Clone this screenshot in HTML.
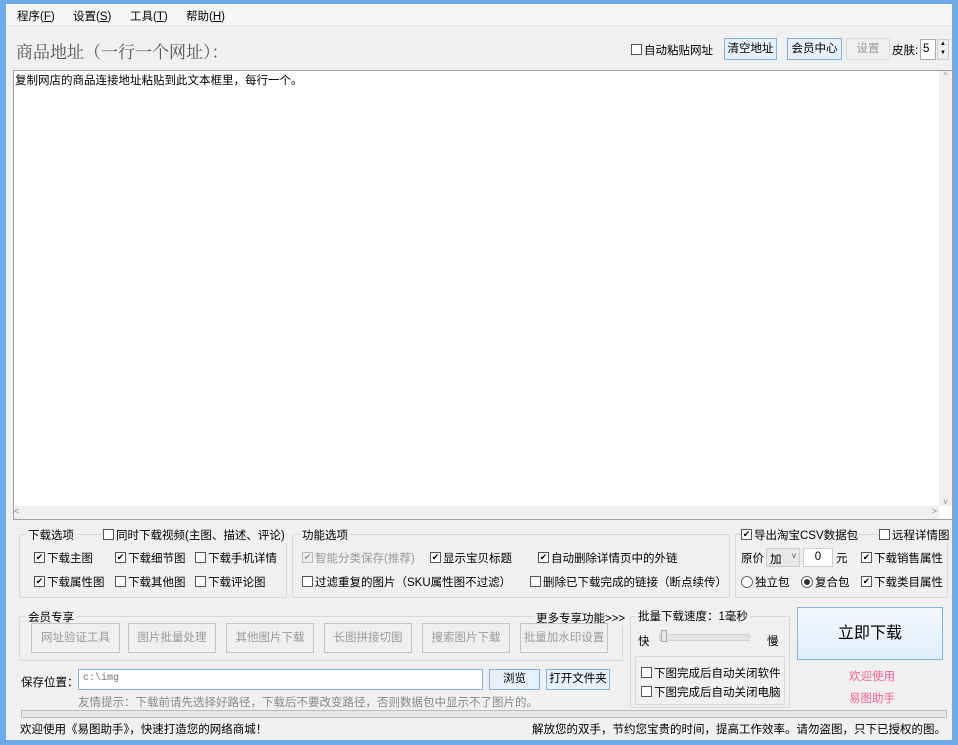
<!DOCTYPE html>
<html><head><meta charset="utf-8"><style>
*{box-sizing:border-box;margin:0;padding:0}
body{width:958px;height:745px;background:#6ea9ea;font:11.5px "Liberation Sans","Noto Sans CJK SC",sans-serif;color:#000;position:relative;overflow:hidden}
.a{position:absolute;white-space:nowrap}
#win{position:absolute;left:6px;top:4px;width:946px;height:736px;background:#f0f0f0}
#bot{position:absolute;left:0;top:-3px;width:946px;height:736px}
.cb{display:inline-block;width:11px;height:11px;border:1px solid #555;background:#fff;vertical-align:-1px;margin-right:2px;position:relative;font-size:10px;line-height:9px;text-align:center}
.ck::after{content:"✔";position:absolute;left:0;top:0;width:9px;font-size:9px;line-height:9px}
.gb{position:absolute;border:1px solid #d8d8d8;border-radius:2px}
.btn{position:absolute;border:1px solid #c4c4c4;background:#efefef;color:#9a9a9a;text-align:center}
.bb{position:absolute;border:1px solid #7eb4ea;background:#e5f1fb;text-align:center}
.rd{display:inline-block;width:12px;height:12px;border:1px solid #666;border-radius:50%;background:#fff;vertical-align:-2px;margin-right:2px;position:relative}
</style></head><body>
<div id="win">
<div class="a" style="left:0;top:0;width:946px;height:22px;background:#f5f6f7;border-bottom:1px solid #e3e3e3"></div>
<div class="a" style="left:11px;top:4px">程序(<u>F</u>)</div>
<div class="a" style="left:67px;top:4px">设置(<u>S</u>)</div>
<div class="a" style="left:124px;top:4px">工具(<u>T</u>)</div>
<div class="a" style="left:180px;top:4px">帮助(<u>H</u>)</div>
<div class="a" style="left:10px;top:34px;font-size:17px;color:#555;font-family:'Liberation Serif','Noto Serif CJK SC',serif">商品地址（一行一个网址）：</div>
<div class="a" style="left:625px;top:38px"><span class="cb"></span>自动粘贴网址</div>
<div class="bb" style="left:718px;top:34px;width:53px;height:22px;line-height:20px">清空地址</div>
<div class="bb" style="left:781px;top:34px;width:55px;height:22px;line-height:20px">会员中心</div>
<div class="btn" style="left:840px;top:34px;width:44px;height:22px;line-height:20px;border-color:#ddd">设置</div>
<div class="a" style="left:886px;top:38px">皮肤:</div>
<div class="a" style="left:914px;top:35px;width:16px;height:21px;border:1px solid #aaa;background:#fff;padding:3px 2px">5</div>
<div class="a" style="left:931px;top:35px;width:12px;height:21px;background:#eee;border:1px solid #ccc;font-size:6px;line-height:9px;text-align:center">▲<br>▼</div>
<div class="a" style="left:7px;top:66px;width:940px;height:450px;background:#fff;border:1px solid #a0a0a0"></div>
<div class="a" style="left:9px;top:68px">复制网店的商品连接地址粘贴到此文本框里，每行一个。</div>
<div class="a" style="left:933px;top:67px;width:13px;height:435px;background:#f0f0f0;font-size:8px;color:#888;text-align:center">^<div style="position:absolute;bottom:0;width:13px">v</div></div>
<div class="a" style="left:8px;top:502px;width:925px;height:13px;background:#f0f0f0;font-size:9px;color:#888">&lt;<span style="position:absolute;right:2px">&gt;</span></div>
<div id="bot">
<div class="gb" style="left:13px;top:533px;width:268px;height:64px"></div>
<div class="a" style="left:20px;top:526px;background:#f0f0f0;padding:0 2px">下载选项</div>
<div class="a" style="left:95px;top:526px;background:#f0f0f0;padding:0 2px"><span class="cb"></span>同时下载视频(主图、描述、评论)</div>
<div class="a" style="left:28px;top:549px"><span class="cb ck"></span>下载主图</div>
<div class="a" style="left:109px;top:549px"><span class="cb ck"></span>下载细节图</div>
<div class="a" style="left:189px;top:549px"><span class="cb"></span>下载手机详情</div>
<div class="a" style="left:28px;top:573px"><span class="cb ck"></span>下载属性图</div>
<div class="a" style="left:109px;top:573px"><span class="cb"></span>下载其他图</div>
<div class="a" style="left:189px;top:573px"><span class="cb"></span>下载评论图</div>
<div class="gb" style="left:286px;top:533px;width:438px;height:64px"></div>
<div class="a" style="left:294px;top:526px;background:#f0f0f0;padding:0 2px">功能选项</div>
<div class="a" style="left:296px;top:549px;color:#999"><span class="cb ck" style="border-color:#bbb;color:#999;background:#eee"></span>智能分类保存(推荐)</div>
<div class="a" style="left:424px;top:549px"><span class="cb ck"></span>显示宝贝标题</div>
<div class="a" style="left:532px;top:549px"><span class="cb ck"></span>自动删除详情页中的外链</div>
<div class="a" style="left:296px;top:573px"><span class="cb"></span>过滤重复的图片（SKU属性图不过滤）</div>
<div class="a" style="left:524px;top:573px"><span class="cb"></span>删除已下载完成的链接（断点续传）</div>
<div class="gb" style="left:729px;top:533px;width:213px;height:64px"></div>
<div class="a" style="left:735px;top:526px;background:#f0f0f0"><span class="cb ck"></span>导出淘宝CSV数据包</div>
<div class="a" style="left:873px;top:526px;background:#f0f0f0"><span class="cb"></span>远程详情图</div>
<div class="a" style="left:735px;top:549px">原价</div>
<div class="a" style="left:760px;top:547px;width:34px;height:19px;border:1px solid #ccc;background:#e8e8e8;padding:2px 3px">加 <span style="font-size:8px;color:#555;float:right">v</span></div>
<div class="a" style="left:797px;top:547px;width:30px;height:19px;border:1px solid #ccc;background:#fff;text-align:center;padding-top:2px">0</div>
<div class="a" style="left:830px;top:549px">元</div>
<div class="a" style="left:855px;top:549px"><span class="cb ck"></span>下载销售属性</div>
<div class="a" style="left:735px;top:573px"><span class="rd"></span>独立包</div>
<div class="a" style="left:795px;top:573px"><span class="rd"><span style="position:absolute;left:2px;top:2px;width:6px;height:6px;border-radius:50%;background:#333"></span></span>复合包</div>
<div class="a" style="left:855px;top:573px"><span class="cb ck"></span>下载类目属性</div>
<div class="gb" style="left:13px;top:615px;width:604px;height:45px"></div>
<div class="a" style="left:20px;top:608px;background:#f0f0f0;padding:0 2px">会员专享</div>
<div class="a" style="left:528px;top:609px;background:#f0f0f0;padding:0 2px">更多专享功能&gt;&gt;&gt;</div>
<div class="btn" style="left:25px;top:622px;width:89px;height:30px;line-height:28px">网址验证工具</div>
<div class="btn" style="left:122px;top:622px;width:88px;height:30px;line-height:28px">图片批量处理</div>
<div class="btn" style="left:220px;top:622px;width:88px;height:30px;line-height:28px">其他图片下载</div>
<div class="btn" style="left:318px;top:622px;width:88px;height:30px;line-height:28px">长图拼接切图</div>
<div class="btn" style="left:416px;top:622px;width:88px;height:30px;line-height:28px">搜索图片下载</div>
<div class="btn" style="left:514px;top:622px;width:88px;height:30px;line-height:28px">批量加水印设置</div>
<div class="a" style="left:15px;top:673px">保存位置：</div>
<div class="a" style="left:72px;top:668px;width:405px;height:21px;border:1px solid #7eb4ea;background:#fff;padding:3px 4px;font-family:'Liberation Mono',monospace;font-size:10px;color:#777">c:\img</div>
<div class="bb" style="left:483px;top:668px;width:51px;height:21px;line-height:19px">浏览</div>
<div class="bb" style="left:540px;top:668px;width:64px;height:21px;line-height:19px">打开文件夹</div>
<div class="a" style="left:72px;top:693px;color:#888">友情提示：下载前请先选择好路径，下载后不要改变路径，否则数据包中显示不了图片的。</div>
<div class="gb" style="left:624px;top:615px;width:160px;height:92px"></div>
<div class="a" style="left:630px;top:607px;background:#f0f0f0;padding:0 2px">批量下载速度：1毫秒</div>
<div class="a" style="left:632px;top:632px">快</div>
<div class="a" style="left:653px;top:633px;width:91px;height:7px;background:#e4e4e4;border:1px solid #d4d4d4"></div>
<div class="a" style="left:655px;top:629px;width:6px;height:12px;background:#eaeaea;border:1px solid #aaa"></div>
<div class="a" style="left:761px;top:632px">慢</div>
<div class="gb" style="left:629px;top:655px;width:150px;height:49px"></div>
<div class="a" style="left:635px;top:664px"><span class="cb"></span>下图完成后自动关闭软件</div>
<div class="a" style="left:635px;top:683px"><span class="cb"></span>下图完成后自动关闭电脑</div>
<div class="a" style="left:791px;top:606px;width:146px;height:53px;border:1px solid #7eb4ea;background:linear-gradient(#f3f8fd,#e1eefb);text-align:center;line-height:51px;font-size:16px">立即下载</div>
<div class="a" style="left:843px;top:667px;color:#f06090">欢迎使用</div>
<div class="a" style="left:843px;top:689px;color:#f06090">易图助手</div>
<div class="a" style="left:15px;top:709px;width:926px;height:8px;border:1px solid #bbb;background:#e6e6e6"></div>
<div class="a" style="left:14px;top:720px">欢迎使用《易图助手》，快速打造您的网络商城！</div>
<div class="a" style="right:6px;top:720px">解放您的双手，节约您宝贵的时间，提高工作效率。请勿盗图，只下已授权的图。</div>
</div>
</div>
</body></html>
